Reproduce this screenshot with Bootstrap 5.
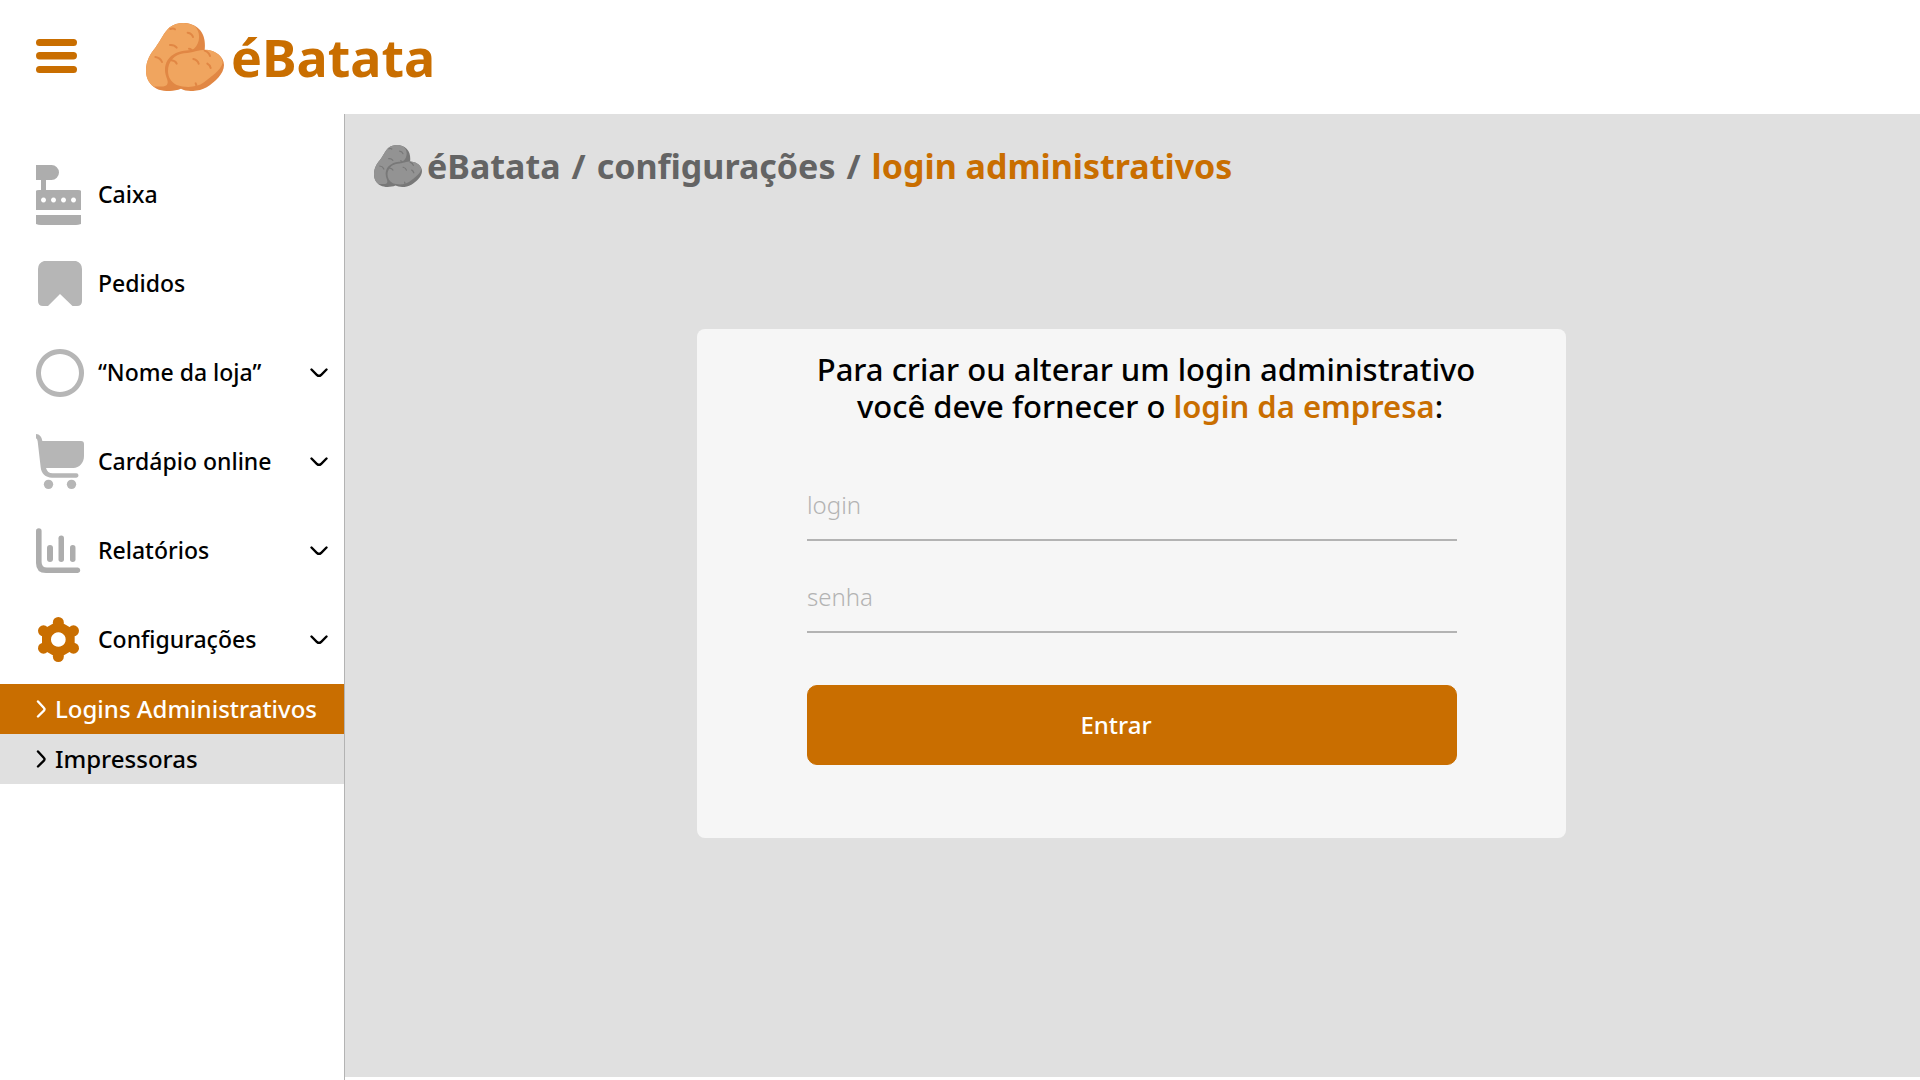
<!DOCTYPE html>
<html lang="pt-BR">
<head>
<meta charset="utf-8">
<meta name="viewport" content="width=device-width, initial-scale=1">
<title>éBatata – Logins administrativos</title>
<link href="https://cdn.jsdelivr.net/npm/bootstrap@5.3.0/dist/css/bootstrap.min.css" rel="stylesheet">
<style>
  :root { --brand: #c96e00; --line: #b3b3b3; --canvas: #e0e0e0; }
  body { font-family: "Noto Sans", "Open Sans", sans-serif; font-weight: 500; color: #000; background: #fff; }
  svg { display: block; flex: none; }
  .topbar { height: 114px; padding: 0 36px; gap: 69px; }
  .menu-toggle { padding: 0; border: 0; background: none; }
  .logo { gap: 7px; color: var(--brand); font-size: 52px; line-height: 68px; font-weight: 700; }
  .sidebar { width: 345px; flex: none; padding-top: 36px; border-right: 1px solid var(--line); }
  .menu-item { height: 89px; width: 100%; padding: 0 16px 0 36px; border: 0; background: none; color: #000; font-size: 23px; font-weight: 500; text-align: left; }
  .menu-icon { width: 62px; flex: none; }
  .menu-icon svg { fill: #adadad; }
  .menu-icon.pale svg { fill: #b6b6b6; }
  .submenu-item { height: 50px; padding: 0 16px 0 36px; gap: 8px; background: var(--canvas); color: #000; font-size: 24px; }
  .submenu-item.active { background: var(--brand); color: #fff; }
  .content { background: var(--canvas); margin-bottom: 3px; padding: 24px 31px 24px 29px; }
  .trail { gap: 5px; color: #646464; font-size: 34px; line-height: 56px; font-weight: 700; }
  .trail .breadcrumb { gap: 11px; }
  .trail .current { color: var(--brand); }
  .login-box { max-width: 869px; margin: 135px auto 0; padding: 22px 109px 73px 110px; border: 0; border-radius: 8px; background: #f6f6f6; }
  .login-title { margin: 0 -40px 44px -12px; font-size: 31px; line-height: 37px; font-weight: 500; }
  .login-title strong { color: var(--brand); font-weight: 600; }
  .line-field + .line-field { margin-top: 20px; }
  .line-field > .form-control { height: 72px; padding-left: 0; padding-right: 0; border: 0; border-bottom: 2px solid var(--line); border-radius: 0; background: none; font-size: 24px; font-weight: 300; }
  .line-field > .form-control:focus { background: none; box-shadow: none; border-color: var(--brand); }
  .line-field > label { padding: 0; border: 0; line-height: 71px; color: var(--line); font-size: 24px; font-weight: 300; }
  .line-field > .form-control:focus ~ label, .line-field > .form-control:not(:placeholder-shown) ~ label { line-height: 32px; }
  .btn-enter { height: 80px; margin-top: 52px; padding-right: 44px; border-radius: 10px; font-size: 24px; font-weight: 500; --bs-btn-color: #fff; --bs-btn-bg: var(--brand); --bs-btn-border-color: var(--brand); --bs-btn-hover-color: #fff; --bs-btn-hover-bg: #b36200; --bs-btn-hover-border-color: #b36200; }
  .potato { --skin: #f0a55f; --shade: #e18744; }
  .potato.muted { --skin: #939393; --shade: #787878; }
</style>
</head>
<body class="d-flex flex-column min-vh-100">

<svg width="0" height="0" class="position-absolute" aria-hidden="true">
  <symbol id="potatoes" viewBox="438 69 234 204">
    <path fill="var(--shade)" d="M438 212C438 181 452 160 466 143C485 118 490 99 509 82C532 64 573 64 597 87C615 105 616 130 614 150C645 148 672 170 672 195C672 222 645 246 620 262C595 276 562 276 543 266C520 275 490 276 470 266C450 255 438 235 438 212Z"/>
    <path fill="var(--skin)" d="M438 212C438 181 452 160 466 143C485 118 490 99 509 82C530 66 562 65 584 78C602 95 602 128 582 146C570 153 550 149 528 159C505 170 494 190 495 212C496 232 508 242 501 254C495 262 478 258 462 260C446 250 438 233 438 212Z"/>
    <path fill="var(--skin)" d="M504 213C504 186 522 164 552 160C584 158 598 147 626 150C650 154 668 172 668 188C662 212 632 230 612 247C588 265 553 263 530 255C512 246 504 230 504 213Z"/>
    <g fill="none" stroke="var(--shade)" stroke-width="6" stroke-linecap="round">
      <path d="M511 87Q520 84 525 88M563 98Q576 100 579 111M510 135Q523 134 530 143M466 171Q481 173 486 186M567 146Q572 146 576 151M514 181Q526 182 530 191M580 177Q593 180 596 191M614 152Q627 157 630 168M622 191Q630 195 632 204M587 250Q591 256 588 261"/>
    </g>
  </symbol>
  <symbol id="chev-down" viewBox="0 0 18 10">
    <path d="M1.5 1.5L7 7Q9 8.700 11 7L16.500 1.500" fill="none" stroke="currentColor" stroke-width="2.400" stroke-linecap="round"/>
  </symbol>
  <symbol id="chev-right" viewBox="0 0 11 18">
    <path d="M2 1.500L8 8Q9 9 8 10.500L2 16.500" fill="none" stroke="currentColor" stroke-width="2.400" stroke-linecap="round"/>
  </symbol>
</svg>

<header class="topbar d-flex align-items-center">
  <button class="menu-toggle" type="button" aria-label="Menu">
    <svg width="41" height="36" viewBox="0 0 41 36" fill="#c96e00"><rect width="41" height="7" rx="3.500"/><rect y="13" width="41" height="7.500" rx="3.700"/><rect y="27" width="41" height="7" rx="3.500"/></svg>
  </button>
  <a href="#" class="logo d-flex align-items-center text-decoration-none">
    <svg class="potato" width="78" height="68" aria-hidden="true"><use href="#potatoes"/></svg>
    <span>éBatata</span>
  </a>
</header>

<div class="d-flex flex-grow-1">
  <nav class="sidebar" aria-label="Principal">
    <a href="#" class="menu-item d-flex align-items-center text-decoration-none">
      <span class="menu-icon"><svg width="45" height="60" viewBox="0 0 45 60"><path fill-rule="evenodd" d="M0 0H15.500A7.500 7.500 0 0 1 15.500 15H10V25H42Q45 25 45 26V45H0V26Q0 25 3 25H5V15H0ZM7.500 32.500a2.500 2.500 0 1 0 .01 0ZM17.500 32.500a2.500 2.500 0 1 0 .01 0ZM27.500 32.500a2.500 2.500 0 1 0 .01 0ZM37.500 32.500a2.500 2.500 0 1 0 .01 0ZM0 50H45V59Q42 60 40 60H5Q2 60 0 59Z"/></svg></span>
      <span>Caixa</span>
    </a>
    <a href="#" class="menu-item d-flex align-items-center text-decoration-none">
      <span class="menu-icon pale"><svg width="48" height="45" viewBox="0 0 48 45"><path d="M8 0H40Q46 2 46 8V40Q46 45 41 45H36.500L24 33L12 45H7Q2 45 2 40V8Q2 2 8 0Z"/></svg></span>
      <span>Pedidos</span>
    </a>
    <button type="button" class="menu-item d-flex align-items-center">
      <span class="menu-icon pale"><svg width="48" height="48" viewBox="0 0 48 48"><path fill-rule="evenodd" d="M24 0a24 24 0 1 0 .01 0ZM24 5a19 19 0 1 1-.01 0Z"/></svg></span>
      <span class="flex-grow-1">“Nome da loja”</span>
      <svg width="18" height="10" aria-hidden="true"><use href="#chev-down"/></svg>
    </button>
    <button type="button" class="menu-item d-flex align-items-center">
      <span class="menu-icon pale"><svg width="48" height="55" viewBox="108 72 144 165"><path d="M108 72C119 73 125 80 127 93H243Q252 93 252 102V138C252 158 238 174 220 174H138C141 184 147 190 158 190H229A6.500 6.500 0 0 1 229 203H156C136 203 124 190 122 172L113 94Q112 86 108 85Z"/><circle cx="145.500" cy="223" r="14"/><circle cx="214.500" cy="223" r="14"/></svg></span>
      <span class="flex-grow-1">Cardápio online</span>
      <svg width="18" height="10" aria-hidden="true"><use href="#chev-down"/></svg>
    </button>
    <button type="button" class="menu-item d-flex align-items-center">
      <span class="menu-icon"><svg width="45" height="45" viewBox="0 0 45 45"><path d="M0 3A2.800 2.800 0 0 1 5.600 3V34Q5.600 39.500 11 39.500H42A2.800 2.800 0 0 1 42 45H10Q0 45 0 35Z"/><rect x="11" y="17" width="6" height="17" rx="3"/><rect x="22.500" y="7.500" width="5.500" height="26.500" rx="2.700"/><rect x="34" y="17" width="5.500" height="17" rx="2.700"/></svg></span>
      <span class="flex-grow-1">Relatórios</span>
      <svg width="18" height="10" aria-hidden="true"><use href="#chev-down"/></svg>
    </button>
    <button type="button" class="menu-item d-flex align-items-center" aria-expanded="true">
      <span class="menu-icon"><svg width="45" height="45" viewBox="108 620.500 135 135"><g style="fill:var(--brand)"><path fill-rule="evenodd" d="M175 631L224 659.500V716.500L175 745L126 716.500V659.500ZM175 666A22 22 0 1 0 175.010 666Z"/><circle cx="175" cy="637" r="16.500"/><circle cx="175" cy="739" r="16.500"/><circle cx="220.500" cy="662" r="16.500"/><circle cx="220.500" cy="714" r="16.500"/><circle cx="130.500" cy="662" r="16.500"/><circle cx="130.500" cy="714" r="16.500"/></g></svg></span>
      <span class="flex-grow-1">Configurações</span>
      <svg width="18" height="10" aria-hidden="true"><use href="#chev-down"/></svg>
    </button>
    <a href="#" class="submenu-item active d-flex align-items-center text-decoration-none" aria-current="page">
      <svg width="11" height="18" aria-hidden="true"><use href="#chev-right"/></svg>
      <span>Logins Administrativos</span>
    </a>
    <a href="#" class="submenu-item d-flex align-items-center text-decoration-none">
      <svg width="11" height="18" aria-hidden="true"><use href="#chev-right"/></svg>
      <span>Impressoras</span>
    </a>
  </nav>

  <main class="content flex-grow-1">
    <div class="trail d-flex align-items-center">
      <svg class="potato muted" width="48" height="42" aria-hidden="true"><use href="#potatoes"/></svg>
      <nav class="breadcrumb m-0" aria-label="Caminho">
        <a href="#" class="text-reset text-decoration-none">éBatata</a><span>/</span>
        <a href="#" class="text-reset text-decoration-none">configurações</a><span>/</span>
        <span class="current">login administrativos</span>
      </nav>
    </div>

    <form class="login-box card">
      <h1 class="login-title text-center">Para criar ou alterar um login administrativo<br>&nbsp;você deve fornecer o <strong>login da empresa</strong>:</h1>
      <div class="form-floating line-field">
        <input class="form-control" id="login" type="text" placeholder=" ">
        <label for="login">login</label>
      </div>
      <div class="form-floating line-field">
        <input class="form-control" id="senha" type="password" placeholder=" ">
        <label for="senha">senha</label>
      </div>
      <button class="btn btn-enter w-100" type="submit">Entrar</button>
    </form>
  </main>
</div>

<script src="https://cdn.jsdelivr.net/npm/bootstrap@5.3.0/dist/js/bootstrap.bundle.min.js"></script>
</body>
</html>
